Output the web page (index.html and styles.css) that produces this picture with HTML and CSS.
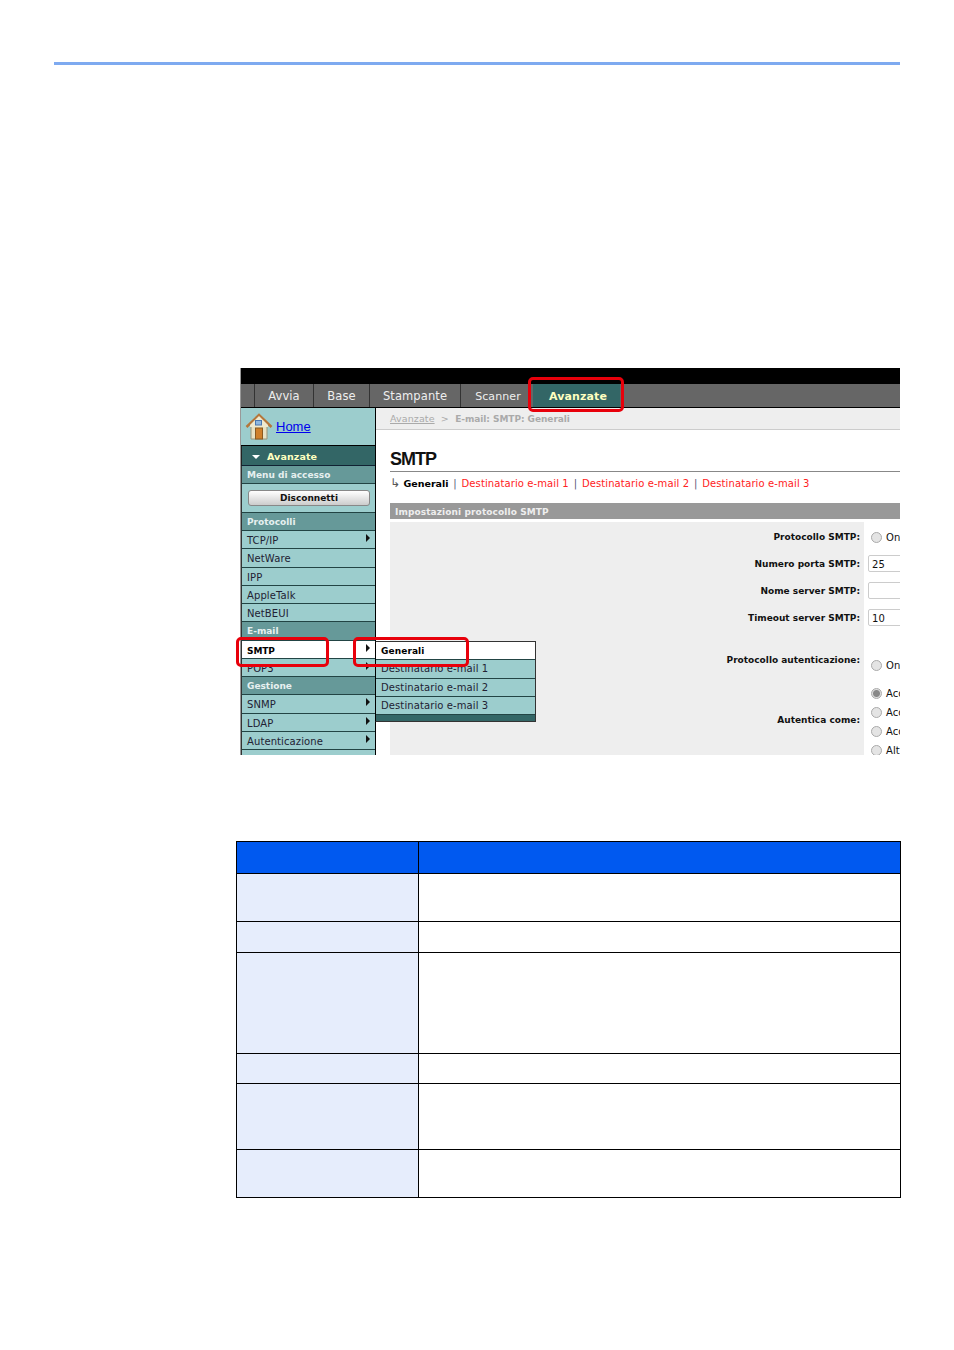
FILE: index.html
```html
<!DOCTYPE html>
<html lang="it">
<head>
    <meta charset="UTF-8">
    <title>SMTP</title>
    <link rel="stylesheet" href="styles.css">
</head>
<body>
    <div class="top-rule"></div>

    <div class="shot">
        <div class="black-bar"></div>
        <div class="tabs">
            <span class="tab tab-first"></span>
            <span class="tab tab-avvia">Avvia</span>
            <span class="tab tab-base">Base</span>
            <span class="tab tab-stampante">Stampante</span>
            <span class="tab tab-scanner">Scanner</span>
            <span class="tab-active">Avanzate</span>
        </div>
        <div class="shot-body">
            <div class="sidebar">
                <div class="home">
                    <svg class="home-icon" width="28" height="28" viewBox="0 0 28 28">
                        <path d="M6 13h16v13H6z" fill="#e8e2c4" stroke="#9a9478"/>
                        <path d="M1.500 14 14 2l12.500 12" fill="none" stroke="#b5763a" stroke-width="2.500"/>
                        <path d="M14 3 5 12v2h18v-2z" fill="#efe9cf"/>
                        <rect x="10.500" y="7.500" width="6" height="4.500" fill="#8fb8e0" stroke="#4a77b0"/>
                        <rect x="10.500" y="15" width="7" height="11" fill="#d0802a" stroke="#8a5a20"/>
                    </svg>
                    <a class="home-link" href="#">Home</a>
                </div>
                <div class="menu-top"><span class="arrow-down"></span>Avanzate</div>
                <div class="menu-head">Menu di accesso</div>
                <div class="logout"><button class="logout-btn">Disconnetti</button></div>
                <div class="menu-head">Protocolli</div>
                <div class="menu-item has-sub">TCP/IP</div>
                <div class="menu-item">NetWare</div>
                <div class="menu-item">IPP</div>
                <div class="menu-item">AppleTalk</div>
                <div class="menu-item">NetBEUI</div>
                <div class="menu-head">E-mail</div>
                <div class="menu-item menu-current has-sub">SMTP</div>
                <div class="menu-item has-sub">POP3</div>
                <div class="menu-head">Gestione</div>
                <div class="menu-item has-sub">SNMP</div>
                <div class="menu-item has-sub">LDAP</div>
                <div class="menu-item has-sub">Autenticazione</div>
                <div class="menu-item"></div>
            </div>
            <div class="main">
                <div class="crumbs"><u>Avanzate</u> &nbsp;&gt;&nbsp; <b>E-mail: SMTP: Generali</b></div>
                <div class="content">
                    <h1 class="title">SMTP</h1>
                    <div class="sub-links">
                        <span class="sub-arrow">↳</span> <b>Generali</b>
                        <i>|</i> <a href="#">Destinatario e-mail 1</a>
                        <i>|</i> <a href="#">Destinatario e-mail 2</a>
                        <i>|</i> <a href="#">Destinatario e-mail 3</a>
                    </div>
                    <div class="section-bar">Impostazioni protocollo SMTP</div>
                    <div class="form-grid">
                        <div class="form-label row-a">Protocollo SMTP:</div>
                        <div class="form-value row-a"><span class="radio"></span>On</div>
                        <div class="form-label row-b">Numero porta SMTP:</div>
                        <div class="form-value row-b"><span class="text-box">25</span></div>
                        <div class="form-label row-b">Nome server SMTP:</div>
                        <div class="form-value row-b"><span class="text-box"></span></div>
                        <div class="form-label row-b">Timeout server SMTP:</div>
                        <div class="form-value row-b"><span class="text-box">10</span></div>
                        <div class="form-label row-c">Protocollo autenticazione:</div>
                        <div class="form-value row-c"><span class="radio"></span>On</div>
                        <div class="form-label row-d">Autentica come:</div>
                        <div class="form-value row-d">
                            <div class="radio-line"><span class="radio radio-on"></span>Acc</div>
                            <div class="radio-line"><span class="radio"></span>Acc</div>
                            <div class="radio-line"><span class="radio"></span>Acc</div>
                            <div class="radio-line"><span class="radio"></span>Alt</div>
                        </div>
                    </div>
                </div>
            </div>
        </div>

        <div class="flyout">
            <div class="fly-item fly-current">Generali</div>
            <div class="fly-item">Destinatario e-mail 1</div>
            <div class="fly-item">Destinatario e-mail 2</div>
            <div class="fly-item">Destinatario e-mail 3</div>
            <div class="fly-foot"></div>
        </div>

        <div class="mark mark-tab"></div>
        <div class="mark mark-smtp"></div>
        <div class="mark mark-generali"></div>
    </div>

    <table class="info-table">
        <tr class="head-row"><th class="col-a"></th><th></th></tr>
        <tr class="r48"><td class="col-a"></td><td></td></tr>
        <tr class="r31"><td class="col-a"></td><td></td></tr>
        <tr class="r101"><td class="col-a"></td><td></td></tr>
        <tr class="r30"><td class="col-a"></td><td></td></tr>
        <tr class="r66"><td class="col-a"></td><td></td></tr>
        <tr class="r48"><td class="col-a"></td><td></td></tr>
    </table>
</body>
</html>
```

FILE: styles.css
```css
body {
    margin: 0;
    background: #fff;
    font-family: "DejaVu Sans", Verdana, sans-serif;
    color: #222;
}
.top-rule {
    height: 3px;
    margin: 62px 54px 0 54px;
    background: #7eaaf0;
}

/* captura de la interfaz web */
.shot {
    position: relative;
    width: 659px;
    height: 387px;
    margin: 303px 0 0 240px;
    border-left: 1px solid #999;
    background: #fff;
    font-size: 10px;
    letter-spacing: 0.1px;
}
.black-bar {
    height: 16px;
    background: #000;
}
.tabs {
    display: flex;
    height: 23px;
    background: #666;
    border-bottom: 1px solid #000;
    color: #eee;
    font-size: 11.5px;
    line-height: 25px;
}
.tab {
    text-align: center;
    border-right: 1px solid #333;
    box-sizing: border-box;
}
.tab-first { width: 14px; }
.tab-avvia { width: 59px; }
.tab-base { width: 56px; }
.tab-stampante { width: 91px; }
.tab-scanner { width: 72px; padding-left: 2px; font-size: 11px; border-right: none; }
.tab-active {
    width: 87px;
    box-sizing: border-box;
    padding-left: 3px;
    text-align: center;
    background: #336666;
    color: #ffffc0;
    font-weight: bold;
    font-size: 11px;
}

.shot-body {
    display: flex;
    height: 347px;
    overflow: hidden;
}
.sidebar {
    width: 134px;
    flex: none;
    background: #9ccdcd;
    border-right: 1px solid #000;
}
.home {
    display: flex;
    align-items: center;
    height: 38px;
    padding-left: 4px;
    box-sizing: border-box;
    border-bottom: 1px solid #000;
}
.home-link {
    margin: 0 0 1px 3px;
    font-family: "Liberation Sans", Arial, sans-serif;
    font-size: 13px;
    letter-spacing: 0;
    color: #0000ee;
}
.menu-top {
    height: 20px;
    box-sizing: border-box;
    line-height: 21px;
    padding-left: 10px;
    background: #336666;
    border-bottom: 1px solid #123;
    border-left: 1px solid #222;
    color: #ffffc0;
    font-weight: bold;
    font-size: 9.5px;
}
.arrow-down {
    display: inline-block;
    margin-right: 7px;
    vertical-align: 1px;
    border-left: 4px solid transparent;
    border-right: 4px solid transparent;
    border-top: 4px solid #fff;
}
.menu-head {
    height: 18.25px;
    box-sizing: border-box;
    line-height: 19px;
    padding-left: 5px;
    background: #669999;
    border-bottom: 1px solid #244;
    border-left: 1px solid #333;
    color: #e6f0f0;
    font-weight: bold;
    font-size: 9px;
    letter-spacing: 0;
}
.logout {
    height: 28.500px;
    box-sizing: border-box;
    padding: 6px 5px 0 6px;
    border-bottom: 1px solid #244;
    border-left: 1px solid #333;
}
.logout-btn {
    display: block;
    width: 122px;
    height: 16px;
    padding: 0;
    border: 1px solid #888;
    border-radius: 3px;
    background: linear-gradient(#fff, #ccc);
    font-family: inherit;
    font-size: 9px;
    font-weight: bold;
    color: #111;
}
.menu-item {
    position: relative;
    height: 18.25px;
    box-sizing: border-box;
    line-height: 20px;
    padding-left: 5px;
    border-bottom: 1px solid #244;
    border-left: 1px solid #333;
    color: #223;
}
.menu-current {
    background: #fff;
    color: #000;
    font-weight: bold;
    font-size: 9px;
    letter-spacing: -0.1px;
}
.has-sub::after {
    content: "";
    position: absolute;
    right: 5px;
    top: 3px;
    border-left: 4px solid #111;
    border-top: 4px solid transparent;
    border-bottom: 4px solid transparent;
}

.main {
    flex: 1;
    min-width: 0;
}
.crumbs {
    height: 22px;
    box-sizing: border-box;
    padding: 5px 0 0 14px;
    background: #eee;
    border-bottom: 1px solid #ccc;
    color: #aaa;
    font-size: 9.5px;
}
.crumbs b { font-size: 9px; letter-spacing: -0.05px; }
.content {
    padding-left: 14px;
}
.title {
    margin: 0;
    padding: 19px 0 2px 0;
    border-bottom: 1px solid #888;
    font-family: "Liberation Sans", Arial, sans-serif;
    font-size: 18px;
    line-height: 20px;
    letter-spacing: -1px;
    color: #111;
}
.sub-links {
    height: 31px;
    padding-top: 4px;
    box-sizing: border-box;
    color: #f00;
    white-space: nowrap;
}
.sub-links b { color: #000; font-size: 9.5px; letter-spacing: 0; }
.sub-links i { font-style: normal; color: #557; margin: 0 1.500px; }
.sub-links a { color: #f22; text-decoration: none; }
.sub-arrow { color: #555; font-size: 12px; }
.section-bar {
    height: 16px;
    padding-left: 5px;
    line-height: 19px;
    background: #999;
    color: #eee;
    font-weight: bold;
    font-size: 9px;
}
.form-grid {
    display: grid;
    grid-template-columns: 474px 1fr;
    margin-top: 3px;
    align-content: start;
    color: #111;
}
.form-label {
    padding-right: 4px;
    background: #eee;
    text-align: right;
    font-weight: bold;
    font-size: 9px;
    letter-spacing: 0;
}
.form-value {
    padding-left: 4px;
    white-space: nowrap;
    overflow: hidden;
}
.row-a { height: 27px; padding-top: 10px; box-sizing: border-box; }
.row-b { height: 27px; padding-top: 10px; box-sizing: border-box; }
.row-c { height: 52px; padding-top: 25px; box-sizing: border-box; }
.row-d { height: 100px; box-sizing: border-box; }
.form-label.row-d { padding-top: 33px; }
.form-value.row-b { padding-top: 6px; }
.form-value.row-a { padding-top: 10px; padding-left: 7px; }
.form-value.row-c { padding-top: 30px; padding-left: 7px; }
.form-value.row-d { padding-top: 5.500px; padding-left: 7px; }
.radio-line { height: 19.250px; }
.radio {
    display: inline-block;
    width: 9px;
    height: 9px;
    margin-right: 4px;
    vertical-align: -2px;
    border: 1px solid #aaa;
    border-radius: 50%;
    background: #e4e4e4;
}
.radio-on {
    background: radial-gradient(circle, #888 0 3px, #ddd 4px);
}
.text-box {
    display: block;
    width: 60px;
    height: 17px;
    box-sizing: border-box;
    padding-left: 3px;
    line-height: 18px;
    border: 1px solid #ccc;
    border-radius: 2px;
    background: #fff;
}

/* menu desplegable sobre la captura */
.flyout {
    position: absolute;
    left: 134px;
    top: 273px;
    width: 159px;
    background: #9ccdcd;
    border: 1px solid #333;
    border-left-color: #000;
    color: #223;
}
.fly-item {
    height: 18.25px;
    box-sizing: border-box;
    line-height: 17px;
    padding-left: 5px;
    border-bottom: 1px solid #244;
}
.fly-current {
    background: #fff;
    color: #000;
    font-weight: bold;
    font-size: 9px;
    line-height: 19px;
}
.fly-foot {
    height: 6px;
    background: #336666;
}
.mark {
    position: absolute;
    box-sizing: border-box;
    border: 3px solid #e8000b;
    border-radius: 5px;
}
.mark-tab { left: 287px; top: 9px; width: 96px; height: 35px; }
.mark-smtp { left: -5px; top: 269px; width: 93px; height: 30px; }
.mark-generali { left: 112px; top: 269px; width: 116px; height: 30px; }

/* tabla inferior */
.info-table {
    width: 665px;
    margin: 86px 0 0 236px;
    border-collapse: collapse;
    table-layout: fixed;
}
.info-table th,
.info-table td {
    padding: 0;
    border: 1px solid #000;
}
.info-table .col-a { width: 181px; background: #e6edfc; }
.head-row { height: 32px; }
.head-row th,
.info-table .head-row .col-a { background: #0059f0; }
.r48 { height: 48px; }
.r31 { height: 31px; }
.r101 { height: 101px; }
.r30 { height: 30px; }
.r66 { height: 66px; }
```
